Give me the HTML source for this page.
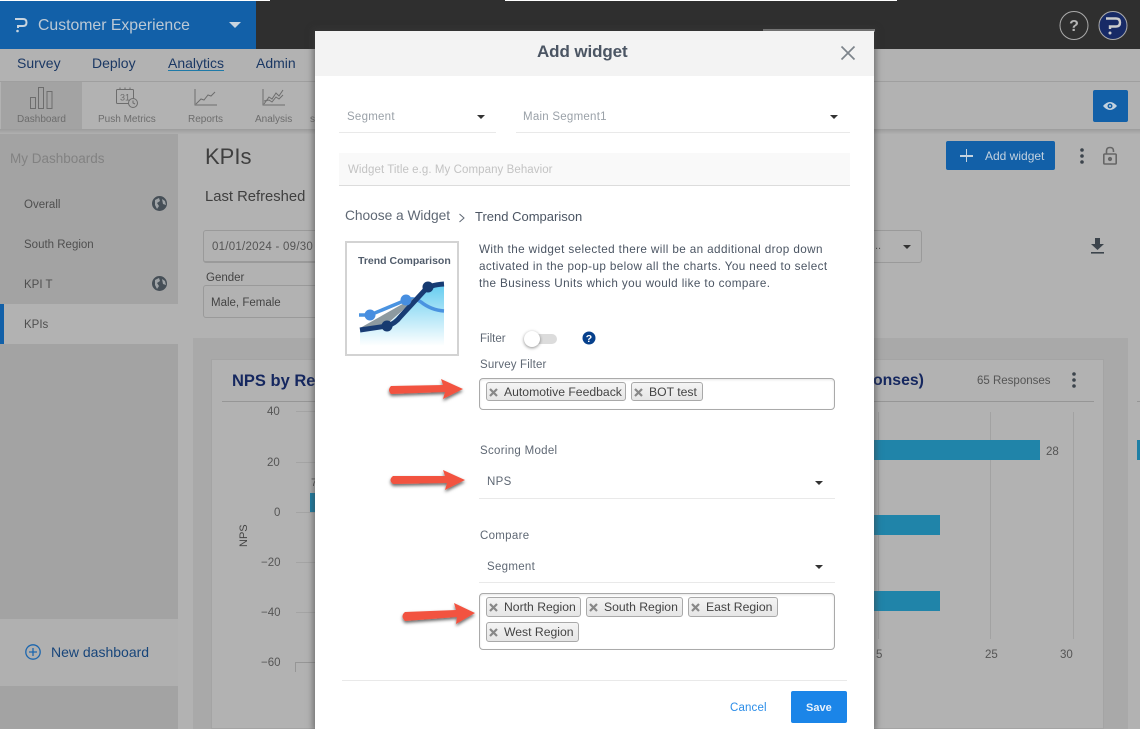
<!DOCTYPE html>
<html><head><meta charset="utf-8"><style>
html,body{margin:0;padding:0;width:1140px;height:729px;overflow:hidden;background:#b2b2b2}
body{position:relative;font-family:"Liberation Sans",sans-serif;color:#444}
.a,.t{position:absolute}
.t{white-space:nowrap;line-height:1}
.tag{position:absolute;height:19px;box-sizing:border-box;border:1px solid #a9a9a9;border-radius:3px;background:linear-gradient(#f4f4f4,#e6e6e6);font-size:12.200px;line-height:18px;color:#444;padding-left:17px;white-space:nowrap}
.tag svg{position:absolute;left:2px;top:5px}
.car{position:absolute;width:0;height:0;border-left:4px solid transparent;border-right:4px solid transparent;border-top:4px solid #333}
.hl{position:absolute;height:1px;background:#e9e9e9}
</style></head><body>
<!-- header -->
<div class="a" style="left:0;top:0;width:1140px;height:49px;background:#2f2f2f"></div>
<div class="a" style="left:0;top:0;width:270px;height:1px;background:#fff"></div>
<div class="a" style="left:505px;top:0;width:392px;height:1px;background:#fff"></div>
<div class="a" style="left:0;top:1px;width:256px;height:48px;background:#1260a8"></div>
<svg class="a" style="left:13px;top:16px" width="16" height="18" viewBox="0 0 16 18"><path d="M2 3H10Q13.500 3 13.500 6.500Q13.500 10 10 10H5V12" fill="none" stroke="#c8d4df" stroke-width="2"/><circle cx="4.500" cy="15" r="1.300" fill="#c8d4df"/></svg>
<div class="t" style="left:38px;top:18px;font-size:15.800px;color:#bcc9d5">Customer Experience</div>
<div class="a" style="left:229px;top:22px;width:0;height:0;border-left:6px solid transparent;border-right:6px solid transparent;border-top:6px solid #c8d4df"></div>
<svg class="a" style="left:1058px;top:10px" width="32" height="32"><circle cx="16" cy="15.500" r="14" fill="none" stroke="#aaa" stroke-width="1"/><text x="16" y="21" text-anchor="middle" font-family="Liberation Sans" font-weight="700" font-size="16" fill="#b5b5b5">?</text></svg>
<svg class="a" style="left:1097px;top:10px" width="32" height="32"><circle cx="16" cy="15.500" r="14" fill="#172a66" stroke="#aaa" stroke-width="1"/><path d="M9 8.500H19Q23 8.500 23 12.500Q23 16.500 19 16.500H13V19" fill="none" stroke="#ccc" stroke-width="2.400"/><circle cx="13" cy="23" r="1.500" fill="#ccc"/></svg>
<!-- nav -->
<div class="t" style="left:17px;top:56px;font-size:14px;color:#1b3864">Survey</div>
<div class="t" style="left:92px;top:56px;font-size:14px;color:#1b3864">Deploy</div>
<div class="t" style="left:168px;top:56px;font-size:14px;color:#1b3864">Analytics</div>
<div class="a" style="left:168px;top:70px;width:56px;height:1px;background:#1e7aa8"></div>
<div class="t" style="left:256px;top:56px;font-size:14px;color:#1b3864">Admin</div>
<div class="a" style="left:0;top:81px;width:1140px;height:1px;background:#9f9f9f"></div>
<div class="a" style="left:1px;top:82px;width:81px;height:47px;background:#a3a3a3"></div>
<div class="a" style="left:0;top:129px;width:1140px;height:5px;background:linear-gradient(#9c9c9c,#b0b0b0)"></div>
<svg class="a" style="left:28px;top:86px" width="26" height="24" fill="none" stroke="#6d6d6d" stroke-width="1"><rect x="2.500" y="11.500" width="5" height="11"/><rect x="10.500" y="1.500" width="5" height="21"/><rect x="19" y="5.500" width="5" height="17"/></svg>
<div class="t" style="left:17px;top:115px;font-size:10px;color:#6d6d6d">Dashboard</div>
<svg class="a" style="left:114px;top:86px" width="26" height="24" fill="none" stroke="#6d6d6d" stroke-width="1"><rect x="2.500" y="3.500" width="17" height="14" rx="1"/><path d="M6 1.500V4M11 1.500V4M16 1.500V4"/><text x="6" y="14.500" font-size="9" fill="#6d6d6d" stroke="none" font-family="Liberation Sans">31</text><circle cx="19" cy="17" r="4.500" fill="#b0b0b0"/><path d="M19 14.500V17L21 18"/></svg>
<div class="t" style="left:98px;top:115px;font-size:10px;color:#6d6d6d">Push Metrics</div>
<svg class="a" style="left:193px;top:88px" width="26" height="20" fill="none" stroke="#6d6d6d" stroke-width="1"><path d="M2 1V17H24M3 16L8 11L11 12L15 7L18 8L22 4"/></svg>
<div class="t" style="left:188px;top:115px;font-size:10px;color:#6d6d6d">Reports</div>
<svg class="a" style="left:261px;top:88px" width="26" height="20" fill="none" stroke="#6d6d6d" stroke-width="1"><path d="M2 1V17H24M3 16L8 9L11 11L15 5L18 8L22 2M3 13L8 12L11 14L15 9L18 11L22 7"/></svg>
<div class="t" style="left:255px;top:115px;font-size:10px;color:#6d6d6d">Analysis</div>
<div class="t" style="left:310px;top:115px;font-size:10px;color:#6d6d6d">si</div>
<div class="a" style="left:1093px;top:90px;width:35px;height:32px;background:#1260a8;border-radius:2px"></div>
<svg class="a" style="left:1102px;top:100px" width="16" height="12"><path d="M1 6Q8 -2 15 6Q8 14 1 6Z" fill="#c3d2df"/><circle cx="8" cy="6" r="2.500" fill="#1260a8"/><circle cx="8" cy="6" r="1" fill="#c3d2df"/></svg>
<!-- sidebar -->
<div class="a" style="left:0;top:134px;width:178px;height:595px;background:#a3a3a3"></div>
<div class="t" style="left:10px;top:152px;font-size:13.500px;color:#828282">My Dashboards</div>
<div class="t" style="left:24px;top:200px;font-size:11.500px;color:#4f4f4f">Overall</div>
<div class="t" style="left:24px;top:240px;font-size:11.500px;color:#4f4f4f">South Region</div>
<div class="t" style="left:24px;top:280px;font-size:11.500px;color:#4f4f4f">KPI T</div>
<svg class="a" style="left:152px;top:196px" width="15" height="15"><circle cx="7.500" cy="7.500" r="7.500" fill="#464f57"/><path d="M3 4L7 2L8 5L5 7L7 10L5 13L3 9ZM10 3L13 5L14 9L11 8Z" fill="#9fa3a6"/></svg>
<svg class="a" style="left:152px;top:276px" width="15" height="15"><circle cx="7.500" cy="7.500" r="7.500" fill="#464f57"/><path d="M3 4L7 2L8 5L5 7L7 10L5 13L3 9ZM10 3L13 5L14 9L11 8Z" fill="#9fa3a6"/></svg>
<div class="a" style="left:0;top:304px;width:178px;height:40px;background:#b2b2b2"></div>
<div class="a" style="left:0;top:304px;width:4px;height:40px;background:#1260a8"></div>
<div class="t" style="left:24px;top:320px;font-size:11.500px;color:#4f4f4f">KPIs</div>
<div class="a" style="left:0;top:619px;width:178px;height:67px;background:#b0b0b0"></div>
<svg class="a" style="left:25px;top:643px" width="17" height="17" fill="none" stroke="#1c66ae" stroke-width="1.300"><circle cx="8" cy="9" r="7.200"/><path d="M8 5V13M4 9H12"/></svg>
<div class="t" style="left:51px;top:645px;font-size:14px;color:#17457a">New dashboard</div>
<!-- page content -->
<div class="t" style="left:205px;top:146px;font-size:22px;color:#3f3f3f">KPIs</div>
<div class="t" style="left:205px;top:190px;font-size:14.800px;color:#3f3f3f">Last Refreshed</div>
<div class="a" style="left:203px;top:230px;width:130px;height:33px;box-sizing:border-box;border:1px solid #9a9a9a;border-bottom-width:2px;border-radius:3px"></div>
<div class="t" style="left:212px;top:242px;font-size:11.500px;color:#555;letter-spacing:.25px">01/01/2024 - 09/30</div>
<div class="t" style="left:206px;top:273px;font-size:11.500px;color:#444">Gender</div>
<div class="a" style="left:203px;top:285px;width:130px;height:33px;box-sizing:border-box;border:1px solid #9a9a9a;border-radius:3px"></div>
<div class="t" style="left:211px;top:298px;font-size:11.500px;color:#444">Male, Female</div>
<div class="a" style="left:870px;top:230px;width:52px;height:33px;box-sizing:border-box;border:1px solid #9a9a9a;border-radius:3px"></div>
<div class="t" style="left:875px;top:241px;font-size:11px;color:#555">..</div>
<div class="car" style="left:903px;top:245px"></div>
<div class="a" style="left:946px;top:141px;width:109px;height:29px;background:#1260a8;border-radius:2px"></div>
<div class="a" style="left:960px;top:155px;width:13px;height:1.500px;background:#c3d2df"></div>
<div class="a" style="left:965.500px;top:149px;width:1.500px;height:13px;background:#c3d2df"></div>
<div class="t" style="left:985px;top:150px;font-size:12px;color:#c3d2df">Add widget</div>
<svg class="a" style="left:1079px;top:148px" width="6" height="16" fill="#3c444c"><circle cx="3" cy="2" r="1.800"/><circle cx="3" cy="8" r="1.800"/><circle cx="3" cy="14" r="1.800"/></svg>
<svg class="a" style="left:1102px;top:146px" width="16" height="20" fill="none" stroke="#666" stroke-width="1.600"><path d="M4.500 8V5Q4.500 1.500 8 1.500Q11.500 1.500 11.500 5V6"/><rect x="1.800" y="8" width="12.400" height="10" rx="1"/><circle cx="8" cy="13" r="1.300" fill="#666"/></svg>
<svg class="a" style="left:1090px;top:238px" width="15" height="17" fill="#3c444c"><path d="M5 0H10V6H14L7.500 12L1 6H5Z"/><rect x="1" y="14" width="13" height="1.600"/></svg>
<div class="a" style="left:193px;top:338px;width:947px;height:391px;background:#a9a9a9"></div>
<div class="a" style="left:1128px;top:338px;width:12px;height:391px;background:#b2b2b2"></div>
<div class="a" style="left:1137px;top:401px;width:3px;height:1px;background:#969696"></div>
<div class="a" style="left:1137px;top:440px;width:3px;height:20px;background:#1e7fa5"></div>
<div class="a" style="left:211px;top:359px;width:893px;height:370px;background:#b2b2b2;border:1px solid #a4a4a4;box-sizing:border-box"></div>
<div class="t" style="left:232px;top:373px;font-size:16.500px;font-weight:700;color:#15275f">NPS by Re</div>
<div class="t" style="left:873px;top:373px;font-size:15.800px;font-weight:700;color:#15275f">onses)</div>
<div class="t" style="left:977px;top:376px;font-size:11.500px;color:#555">65 Responses</div>
<svg class="a" style="left:1071px;top:372px" width="6" height="16" fill="#3c444c"><circle cx="3" cy="2" r="1.800"/><circle cx="3" cy="8" r="1.800"/><circle cx="3" cy="14" r="1.800"/></svg>
<div class="a" style="left:222px;top:401px;width:872px;height:1px;background:#969696"></div>
<div class="t" style="left:267px;top:407px;font-size:11.500px;color:#555">40</div>
<div class="t" style="left:267px;top:458px;font-size:11.500px;color:#555">20</div>
<div class="t" style="left:274px;top:508px;font-size:11.500px;color:#555">0</div>
<div class="t" style="left:261px;top:558px;font-size:11.500px;color:#555">−20</div>
<div class="t" style="left:261px;top:608px;font-size:11.500px;color:#555">−40</div>
<div class="t" style="left:261px;top:658px;font-size:11.500px;color:#555">−60</div>
<div class="a" style="left:296px;top:411px;width:19px;height:1px;background:#a4a4a4"></div>
<div class="a" style="left:296px;top:462px;width:19px;height:1px;background:#a4a4a4"></div>
<div class="a" style="left:296px;top:512px;width:19px;height:1px;background:#a4a4a4"></div>
<div class="a" style="left:296px;top:562px;width:19px;height:1px;background:#a4a4a4"></div>
<div class="a" style="left:296px;top:612px;width:19px;height:1px;background:#a4a4a4"></div>
<div class="a" style="left:295px;top:662px;width:20px;height:1px;background:#969696"></div>
<div class="a" style="left:295px;top:662px;width:1px;height:10px;background:#969696"></div>
<div class="a" style="left:310px;top:493px;width:5px;height:19px;background:#1e7fa5"></div>
<div class="t" style="left:311px;top:478px;font-size:11px;color:#555">7</div>
<div class="t" style="left:239px;font-size:11px;color:#444;transform:rotate(-90deg);transform-origin:left top;top:547px">NPS</div>
<div class="a" style="left:878px;top:412px;width:1px;height:227px;background:#a2a2a2"></div>
<div class="a" style="left:990px;top:412px;width:1px;height:227px;background:#a2a2a2"></div>
<div class="a" style="left:1073px;top:412px;width:1px;height:227px;background:#a2a2a2"></div>
<div class="a" style="left:870px;top:440px;width:170px;height:20px;background:#2084a9"></div>
<div class="a" style="left:870px;top:515px;width:70px;height:20px;background:#2084a9"></div>
<div class="a" style="left:870px;top:591px;width:70px;height:20px;background:#2084a9"></div>
<div class="t" style="left:1046px;top:447px;font-size:11.500px;color:#555">28</div>
<div class="t" style="left:876px;top:650px;font-size:11.500px;color:#555">5</div>
<div class="t" style="left:985px;top:650px;font-size:11.500px;color:#555">25</div>
<div class="t" style="left:1060px;top:650px;font-size:11.500px;color:#555">30</div>
<!-- modal -->
<div class="a" style="left:763px;top:29px;width:112px;height:3px;background:#8f8f8f"></div>
<div class="a" style="left:315px;top:31px;width:559px;height:698px;background:#fff;box-shadow:0 0 6px 2px rgba(60,60,60,.55)"></div>
<div class="a" style="left:315px;top:31px;width:559px;height:45px;background:#f3f3f3"></div>
<div class="t" style="left:537px;top:43px;font-size:17px;font-weight:700;color:#4b5563;letter-spacing:-.1px">Add widget</div>
<svg class="a" style="left:840px;top:45px" width="16" height="16" stroke="#7d848b" stroke-width="1.700"><path d="M1.500 1.500L14.500 14.500M14.500 1.500L1.500 14.500"/></svg>
<div class="t" style="left:347px;top:112px;font-size:11.500px;color:#9aa1a8;letter-spacing:.25px">Segment</div>
<div class="car" style="left:477px;top:115px"></div>
<div class="hl" style="left:339px;top:132px;width:157px"></div>
<div class="t" style="left:523px;top:112px;font-size:11.500px;color:#9aa1a8;letter-spacing:.25px">Main Segment1</div>
<div class="car" style="left:830px;top:115px"></div>
<div class="hl" style="left:516px;top:132px;width:334px"></div>
<div class="a" style="left:339px;top:153px;width:511px;height:32px;background:#f9f9f9"></div>
<div class="a" style="left:339px;top:185px;width:511px;height:1px;background:#dcdcdc"></div>
<div class="t" style="left:348px;top:165px;font-size:11.500px;color:#c3c3c3;letter-spacing:.07px">Widget Title e.g. My Company Behavior</div>
<div class="t" style="left:345px;top:209px;font-size:13.800px;color:#5f6874;letter-spacing:-.05px">Choose a Widget</div>
<svg class="a" style="left:458px;top:213px" width="8" height="10" fill="none" stroke="#5f6874" stroke-width="1"><path d="M1.500 1L6 5L1.500 9"/></svg>
<div class="t" style="left:475px;top:210px;font-size:13px;color:#4b5563">Trend Comparison</div>
<div class="a" style="left:345px;top:241px;width:114px;height:115px;box-sizing:border-box;border:2px solid #d3d3d3;background:#fff"></div>
<div class="t" style="left:358px;top:256px;font-size:10.500px;font-weight:700;color:#515c6b">Trend Comparison</div>
<svg class="a" style="left:359px;top:280px" width="88" height="70">
<defs><linearGradient id="g" x1="0" y1="0" x2="0" y2="1"><stop offset="0" stop-color="#66cdf0"/><stop offset="1" stop-color="#fff"/></linearGradient></defs>
<path d="M1 50L28 45L69 8L85 5V66H1Z" fill="url(#g)"/>
<path d="M0 35H11L47 20Q55 17 62 22Q72 30 85 31" fill="none" stroke="#4a93e0" stroke-width="3.500"/>
<path d="M1 48L47 22L60 16L28 44Z" fill="#8d9aa0"/>
<path d="M1 50L28 46Q36 44 42 36L66 10Q70 5 85 4" fill="none" stroke="#183c74" stroke-width="5"/>
<circle cx="11" cy="35" r="5.500" fill="#478ee0"/><circle cx="47" cy="20" r="5.500" fill="#478ee0"/><circle cx="28" cy="46" r="5.500" fill="#163a70"/><circle cx="69" cy="7" r="5.500" fill="#163a70"/>
</svg>
<div class="t" style="left:479px;top:244px;font-size:11.700px;color:#4b5563;letter-spacing:.39px">With the widget selected there will be an additional drop down</div>
<div class="t" style="left:479px;top:261px;font-size:11.700px;color:#4b5563;letter-spacing:.39px">activated in the pop-up below all the charts. You need to select</div>
<div class="t" style="left:479px;top:278px;font-size:11.700px;color:#4b5563;letter-spacing:.39px">the Business Units which you would like to compare.</div>
<div class="t" style="left:480px;top:334px;font-size:11.500px;color:#5f6874">Filter</div>
<div class="a" style="left:526px;top:334px;width:31px;height:10px;border-radius:5px;background:#dcdcdc"></div>
<div class="a" style="left:524px;top:331px;width:16px;height:16px;border-radius:50%;background:#fff;box-shadow:0 1px 3px rgba(0,0,0,.45)"></div>
<svg class="a" style="left:582px;top:331px" width="14" height="14"><circle cx="7" cy="7" r="6.500" fill="#06408c"/><text x="7" y="11" text-anchor="middle" font-size="10.500" font-weight="700" fill="#fff" font-family="Liberation Sans">?</text></svg>
<div class="t" style="left:480px;top:360px;font-size:11.500px;color:#5f6874;letter-spacing:.15px">Survey Filter</div>
<div class="a" style="left:479px;top:378px;width:356px;height:32px;box-sizing:border-box;border:1px solid #aaa;border-radius:4px;box-shadow:inset 0 1px 2px rgba(0,0,0,.1)"></div>
<div class="tag" style="left:486px;top:382px;width:140px"><svg width="9" height="9" stroke="#888" stroke-width="2.200"><path d="M1 1L8 8M8 1L1 8"/></svg>Automotive Feedback</div>
<div class="tag" style="left:631px;top:382px;width:72px"><svg width="9" height="9" stroke="#888" stroke-width="2.200"><path d="M1 1L8 8M8 1L1 8"/></svg>BOT test</div>
<svg class="a" style="left:385px;top:376px;overflow:visible" width="80" height="28"><defs><filter id="s" x="-20%" y="-40%" width="140%" height="180%"><feDropShadow dx="0" dy="2" stdDeviation="1.500" flood-color="#000" flood-opacity=".6"/></filter></defs><path d="M6 10L58 9L56 3L78 13L58 23L60 16L6 18Q2 14 6 10Z" fill="#f2523f" filter="url(#s)"/></svg>
<div class="t" style="left:480px;top:446px;font-size:11.500px;color:#5f6874;letter-spacing:.3px">Scoring Model</div>
<div class="t" style="left:487px;top:477px;font-size:11.500px;color:#5f6874;letter-spacing:.3px">NPS</div>
<div class="car" style="left:815px;top:481px"></div>
<div class="hl" style="left:479px;top:498px;width:356px"></div>
<svg class="a" style="left:387px;top:468px;overflow:visible" width="80" height="28"><path d="M6 8L58 8L56 2L78 12L58 22L60 15L6 16Q1 12 6 8Z" fill="#f2523f" filter="url(#s)"/></svg>
<div class="t" style="left:480px;top:531px;font-size:11.500px;color:#5f6874;letter-spacing:.3px">Compare</div>
<div class="t" style="left:487px;top:562px;font-size:11.500px;color:#5f6874;letter-spacing:.3px">Segment</div>
<div class="car" style="left:815px;top:565px"></div>
<div class="hl" style="left:479px;top:582px;width:356px"></div>
<div class="a" style="left:479px;top:593px;width:356px;height:57px;box-sizing:border-box;border:1px solid #aaa;border-radius:4px;box-shadow:inset 0 1px 2px rgba(0,0,0,.1)"></div>
<div class="tag" style="left:486px;top:597px;width:95px;height:20px"><svg width="9" height="9" stroke="#888" stroke-width="2.200"><path d="M1 1L8 8M8 1L1 8"/></svg>North Region</div>
<div class="tag" style="left:586px;top:597px;width:97px;height:20px"><svg width="9" height="9" stroke="#888" stroke-width="2.200"><path d="M1 1L8 8M8 1L1 8"/></svg>South Region</div>
<div class="tag" style="left:688px;top:597px;width:90px;height:20px"><svg width="9" height="9" stroke="#888" stroke-width="2.200"><path d="M1 1L8 8M8 1L1 8"/></svg>East Region</div>
<div class="tag" style="left:486px;top:622px;width:93px;height:20px"><svg width="9" height="9" stroke="#888" stroke-width="2.200"><path d="M1 1L8 8M8 1L1 8"/></svg>West Region</div>
<svg class="a" style="left:400px;top:606px;overflow:visible" width="80" height="28"><path d="M5 6L56 4L54 -3L75 7L56 18L57 11L5 15Q0 10 5 6Z" fill="#f2523f" filter="url(#s)"/></svg>
<div class="hl" style="left:342px;top:680px;width:505px"></div>
<div class="t" style="left:730px;top:703px;font-size:11.500px;color:#2b8de8;letter-spacing:.15px">Cancel</div>
<div class="a" style="left:791px;top:691px;width:56px;height:32px;background:#1b85e8;border-radius:2px"></div>
<div class="t" style="left:806px;top:703px;font-size:11px;font-weight:700;color:#e8f2fc">Save</div>
</body></html>
